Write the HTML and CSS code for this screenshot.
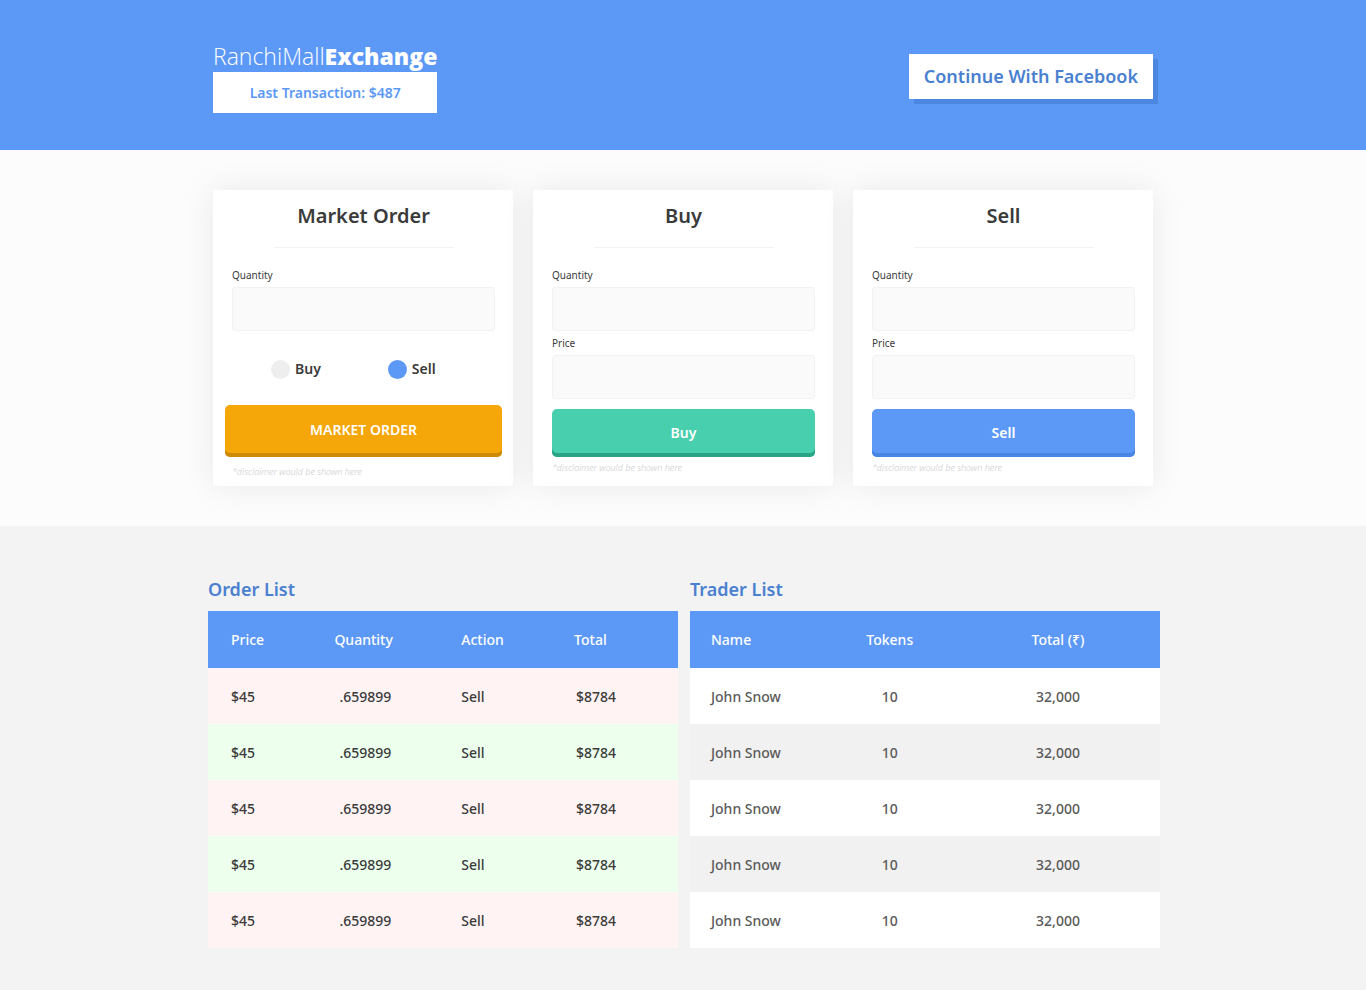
FILE: index.html
```html
<!DOCTYPE html>
<html lang="en">
<head>
  <meta charset="utf-8">
  <meta name="viewport" content="width=device-width, initial-scale=1">
  <title>RanchiMall Exchange</title>
  <link rel="stylesheet" href="styles.css">
</head>
<body>
  <header class="site-header">
    <div class="container header-row">
      <div class="brand">
        <h1 class="logo">RanchiMall<strong>Exchange</strong></h1>
        <p class="last-transaction">Last Transaction: $487</p>
      </div>
      <button class="facebook-button" type="button">Continue With Facebook</button>
    </div>
  </header>

  <main>
    <section class="orders">
      <div class="container cards">
        <form class="card">
          <h2 class="card-title">Market Order</h2>
          <label class="field-label" for="market-quantity">Quantity</label>
          <input class="field" id="market-quantity" type="text">
          <div class="choices">
            <label class="choice"><input class="choice-dot" type="radio" name="side" value="buy">Buy</label>
            <label class="choice"><input class="choice-dot" type="radio" name="side" value="sell" checked>Sell</label>
          </div>
          <button class="submit submit-market" type="button">MARKET ORDER</button>
          <p class="disclaimer disclaimer-market">*disclaimer would be shown here</p>
        </form>

        <form class="card">
          <h2 class="card-title">Buy</h2>
          <label class="field-label" for="buy-quantity">Quantity</label>
          <input class="field" id="buy-quantity" type="text">
          <label class="field-label" for="buy-price">Price</label>
          <input class="field" id="buy-price" type="text">
          <button class="submit submit-buy" type="button">Buy</button>
          <p class="disclaimer">*disclaimer would be shown here</p>
        </form>

        <form class="card">
          <h2 class="card-title">Sell</h2>
          <label class="field-label" for="sell-quantity">Quantity</label>
          <input class="field" id="sell-quantity" type="text">
          <label class="field-label" for="sell-price">Price</label>
          <input class="field" id="sell-price" type="text">
          <button class="submit submit-sell" type="button">Sell</button>
          <p class="disclaimer">*disclaimer would be shown here</p>
        </form>
      </div>
    </section>

    <section class="lists">
      <div class="container-wide list-grid">
        <div class="list">
          <h2 class="list-title" id="order-title">Order List</h2>
          <table class="table order-table" aria-labelledby="order-title">
            <colgroup><col class="col-price"><col class="col-quantity"><col class="col-action"><col class="col-sum"></colgroup>
            <thead>
              <tr><th>Price</th><th>Quantity</th><th>Action</th><th>Total</th></tr>
            </thead>
            <tbody>
              <tr><td>$45</td><td class="quantity">.659899</td><td>Sell</td><td class="sum">$8784</td></tr>
              <tr><td>$45</td><td class="quantity">.659899</td><td>Sell</td><td class="sum">$8784</td></tr>
              <tr><td>$45</td><td class="quantity">.659899</td><td>Sell</td><td class="sum">$8784</td></tr>
              <tr><td>$45</td><td class="quantity">.659899</td><td>Sell</td><td class="sum">$8784</td></tr>
              <tr><td>$45</td><td class="quantity">.659899</td><td>Sell</td><td class="sum">$8784</td></tr>
            </tbody>
          </table>
        </div>

        <div class="list">
          <h2 class="list-title" id="trader-title">Trader List</h2>
          <table class="table trader-table" aria-labelledby="trader-title">
            <colgroup><col class="col-name"><col class="col-tokens"><col class="col-total"></colgroup>
            <thead>
              <tr><th>Name</th><th class="tokens">Tokens</th><th class="total">Total (₹)</th></tr>
            </thead>
            <tbody>
              <tr><td>John Snow</td><td class="tokens">10</td><td class="total">32,000</td></tr>
              <tr><td>John Snow</td><td class="tokens">10</td><td class="total">32,000</td></tr>
              <tr><td>John Snow</td><td class="tokens">10</td><td class="total">32,000</td></tr>
              <tr><td>John Snow</td><td class="tokens">10</td><td class="total">32,000</td></tr>
              <tr><td>John Snow</td><td class="tokens">10</td><td class="total">32,000</td></tr>
            </tbody>
          </table>
        </div>
      </div>
    </section>
  </main>
</body>
</html>
```

FILE: styles.css
```css
* {
  box-sizing: border-box;
}

body {
  margin: 0;
  background: #f3f3f3;
  color: #3a3a3a;
  font-family: "Noto Sans", "Open Sans", sans-serif;
  font-size: 14px;
  line-height: 20px;
}

h1,
h2,
p {
  margin: 0;
}

button,
input {
  font: inherit;
}

.container,
.container-wide {
  margin: 0 auto;
  max-width: 940px;
}

.container-wide {
  max-width: 954px;
  padding-left: 2px;
}

/* Header */

.site-header {
  background: #5c99f7;
  padding: 40px 0 37px;
}

.header-row {
  display: flex;
  flex-wrap: wrap;
  align-items: center;
  justify-content: space-between;
  gap: 16px;
}

.logo {
  color: #fff;
  font-family: "Open Sans", "Noto Sans", sans-serif;
  font-size: 23px;
  font-weight: 300;
  line-height: 32px;
}

.logo strong {
  font-weight: 800;
}

.last-transaction {
  padding: 11px 16px 10px;
  background: #fff;
  color: #5c99f7;
  font-weight: 600;
  text-align: center;
}

.facebook-button {
  padding: 10px 15px 11px;
  border: 0;
  background: #fff;
  box-shadow: 5px 5px 0 #4b87e0;
  color: #4a80d0;
  font-size: 18px;
  font-weight: 600;
  line-height: 24px;
}

/* Order cards */

.orders {
  padding: 40px 0;
  background: #fcfcfc;
}

.cards {
  display: grid;
  grid-template-columns: repeat(auto-fit, minmax(280px, 1fr));
  gap: 20px;
}

.card {
  display: flex;
  flex-direction: column;
  padding: 12px 18px 6px 19px;
  background: #fff;
  box-shadow: 0 0 30px rgba(0, 0, 0, 0.08);
}

.card-title {
  width: 180px;
  margin: 0 auto 15px;
  padding-bottom: 17px;
  border-bottom: 1px solid #f3f3f3;
  font-size: 20px;
  font-weight: 600;
  line-height: 28px;
  text-align: center;
}

.field-label {
  padding: 4px 0;
  font-size: 10px;
  line-height: 16px;
}

.field {
  width: 100%;
  height: 44px;
  padding: 0 12px;
  border: 1px solid #f2f2f2;
  border-radius: 3px;
  background: #fafafa;
}

.choices {
  display: flex;
  gap: 67px;
  margin: 28px 0 26px 39px;
}

.choice {
  display: flex;
  align-items: center;
  gap: 5px;
  font-weight: 600;
}

.choice-dot {
  width: 19px;
  height: 19px;
  margin: 0;
  border-radius: 50%;
  background: #eee;
  appearance: none;
}

.choice-dot:checked {
  background: #5c99f7;
}

.submit {
  height: 48px;
  margin-top: 10px;
  padding: 0 16px;
  border: 0;
  border-radius: 5px;
  color: #fff;
  font-weight: 600;
}

.submit-market {
  height: 52px;
  margin: 0 -7px;
  padding-bottom: 2px;
  background: #f5a608;
  box-shadow: inset 0 -4px 0 #cd8a04;
}

.submit-buy {
  background: #47cfae;
  box-shadow: inset 0 -4px 0 #29a586;
}

.submit-sell {
  background: #5c99f7;
  box-shadow: inset 0 -4px 0 #4885e4;
}

.disclaimer {
  margin-top: 3px;
  color: #cccccc;
  font-size: 9px;
  font-style: italic;
  font-weight: 300;
  line-height: 16px;
}

.disclaimer-market {
  margin-top: 7px;
}

/* Lists */

.lists {
  padding: 50px 0 42px;
}

.list-grid {
  display: grid;
  grid-template-columns: repeat(auto-fit, minmax(340px, 1fr));
  gap: 12px;
}

.list-title {
  margin-bottom: 9px;
  color: #4a80d0;
  font-size: 18px;
  font-weight: 600;
  line-height: 26px;
}

.table {
  width: 100%;
  border-collapse: collapse;
  table-layout: fixed;
}

.table th,
.table td {
  height: 56px;
  padding: 2px 0 0 23px;
  font-weight: 500;
  text-align: left;
}

.table th {
  height: 57px;
  padding-top: 0;
  background: #5c99f7;
  color: #fff;
}

.col-price {
  width: 22%;
}

.col-quantity {
  width: 27%;
}

.col-action {
  width: 24%;
}

.col-sum {
  width: 27%;
}

.order-table .quantity {
  padding-left: 28px;
}

.order-table .sum {
  padding-left: 25px;
}

.order-table tbody tr:nth-child(odd) {
  background: #fff3f3;
}

.order-table tbody tr:nth-child(even) {
  background: #edffed;
}

.col-name {
  width: 25%;
}

.col-tokens {
  width: 35%;
}

.col-total {
  width: 40%;
}

.trader-table {
  color: #5a5a5a;
}

.trader-table th,
.trader-table td {
  padding-left: 21px;
  white-space: nowrap;
}

.trader-table .tokens {
  padding-left: 0;
  text-align: center;
}

.trader-table .total {
  padding-right: 16px;
  padding-left: 0;
  text-align: center;
}

.trader-table tbody tr:nth-child(odd) {
  background: #fff;
}

.trader-table tbody tr:nth-child(even) {
  background: #f1f1f1;
}
```
